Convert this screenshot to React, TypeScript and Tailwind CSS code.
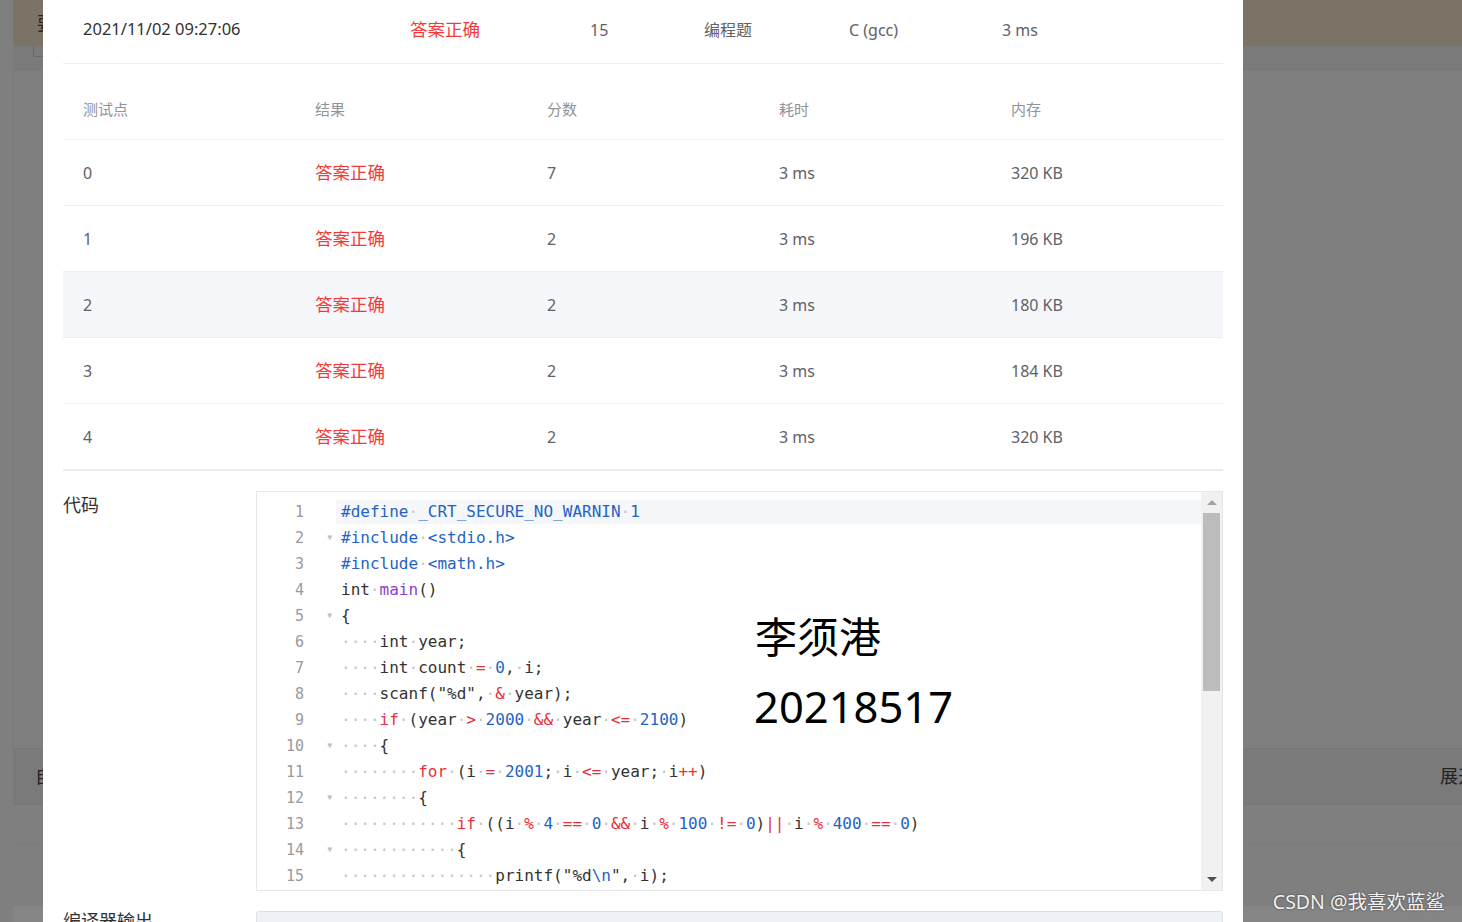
import React from "react";

type Tok = [string, string];

const D = "text-[#333333]";
const B = "text-[#1f63c6]";
const R = "text-[#e8303a]";
const P = "text-[#8b3fd0]";

const code: Tok[][] = [
  [["#define _CRT_SECURE_NO_WARNIN 1", B]],
  [["#include <stdio.h>", B]],
  [["#include <math.h>", B]],
  [["int ", D], ["main", P], ["()", D]],
  [["{", D]],
  [["    int year;", D]],
  [["    int count ", D], ["=", R], [" ", D], ["0", B], [", i;", D]],
  [["    scanf(\"%d\", ", D], ["&", R], [" year);", D]],
  [["    ", D], ["if", R], [" (year ", D], [">", R], [" ", D], ["2000", B], [" ", D], ["&&", R], [" year ", D], ["<=", R], [" ", D], ["2100", B], [")", D]],
  [["    {", D]],
  [["        ", D], ["for", R], [" (i ", D], ["=", R], [" ", D], ["2001", B], ["; i ", D], ["<=", R], [" year; i", D], ["++", R], [")", D]],
  [["        {", D]],
  [["            ", D], ["if", R], [" ((i ", D], ["%", R], [" ", D], ["4", B], [" ", D], ["==", R], [" ", D], ["0", B], [" ", D], ["&&", R], [" i ", D], ["%", R], [" ", D], ["100", B], [" ", D], ["!=", R], [" ", D], ["0", B], [")", D], ["||", R], [" i ", D], ["%", R], [" ", D], ["400", B], [" ", D], ["==", R], [" ", D], ["0", B], [")", D]],
  [["            {", D]],
  [["                printf(\"%d", D], ["\\n", B], ["\", i);", D]],
];

const folds = [2, 5, 10, 12, 14];

const cases = [
  { id: "0", score: "7", time: "3 ms", mem: "320 KB" },
  { id: "1", score: "2", time: "3 ms", mem: "196 KB" },
  { id: "2", score: "2", time: "3 ms", mem: "180 KB" },
  { id: "3", score: "2", time: "3 ms", mem: "184 KB" },
  { id: "4", score: "2", time: "3 ms", mem: "320 KB" },
];

function Tokens({ line }: { line: Tok[] }) {
  return (
    <>
      {line.map(([text, color], i) => (
        <span key={i} className={color}>
          {text.split("").map((ch, j) =>
            ch === " " ? (
              <span key={j} className="text-[#c6c6c6]">·</span>
            ) : (
              ch
            )
          )}
        </span>
      ))}
    </>
  );
}

function CodeBox() {
  return (
    <div className="relative flex h-[400px] flex-1 border border-[#e4e7ed] bg-white">
      <div className="flex-1 overflow-hidden pt-[7px] font-['DejaVu_Sans_Mono',monospace] text-[16px]">
        {code.map((line, i) => (
          <div key={i} className="flex h-[26px] items-center">
            <div className="w-[47px] text-right text-[15px] text-[#9a9a9a]">{i + 1}</div>
            <div className="flex w-[32px] justify-end pr-[4px] text-[8px] text-[#bdbdbd]">
              {folds.includes(i + 1) ? "▼" : ""}
            </div>
            <div
              className={
                i === 0
                  ? "flex h-[24px] flex-1 items-center whitespace-pre bg-[#f5f7fa] pl-[5px]"
                  : "flex h-[24px] flex-1 items-center whitespace-pre pl-[5px]"
              }
            >
              <Tokens line={line} />
            </div>
          </div>
        ))}
      </div>
      <div className="flex w-[21px] flex-col items-center bg-[#f1f1f1]">
        <div className="mt-[8px] h-0 w-0 border-x-[5px] border-b-[5px] border-x-transparent border-b-[#a3a3a3]" />
        <div className="mt-[8px] h-[178px] w-[17px] bg-[#bcbcbc]" />
        <div className="mt-auto mb-[8px] h-0 w-0 border-x-[5px] border-t-[5px] border-x-transparent border-t-[#505050]" />
      </div>
      {/* name / id written over the editor */}
      <div className="absolute left-[498px] top-[124px] font-['Noto_Sans','Noto_Sans_CJK_SC',sans-serif] text-[42px] leading-none text-black">
        李须港
      </div>
      <div className="absolute left-[497px] top-[193px] font-['Noto_Sans','Noto_Sans_CJK_SC',sans-serif] text-[43.5px] leading-none text-black">
        20218517
      </div>
    </div>
  );
}

function Modal() {
  return (
    <div className="absolute left-[43px] top-0 h-[922px] w-[1200px] overflow-hidden bg-white px-[20px] font-['Noto_Sans','Noto_Sans_CJK_SC',sans-serif]">
      {/* submission summary row */}
      <div className="flex h-[64px] items-center border-b border-[#ebeef5] pb-[4px] text-[16px] text-[#303133]">
        <div className="w-[327px] pl-[20px] text-[16.5px]">2021/11/02 09:27:06</div>
        <div className="w-[180px] pl-[20px] text-[17.5px] text-[#f5383a]">答案正确</div>
        <div className="w-[114px] pl-[20px] text-[#606266]">15</div>
        <div className="w-[145px] pl-[20px] text-[#606266]">编程题</div>
        <div className="w-[153px] pl-[20px] text-[#606266]">C (gcc)</div>
        <div className="flex-1 pl-[20px] text-[#606266]">3 ms</div>
      </div>

      {/* test cases */}
      <div className="mt-[16px] border-b border-[#e4e7ed]">
        <div className="grid h-[60px] grid-cols-5 items-center border-b border-[#ebeef5] text-[15px] text-[#909399]">
          <div className="pl-[20px]">测试点</div>
          <div className="pl-[20px]">结果</div>
          <div className="pl-[20px]">分数</div>
          <div className="pl-[20px]">耗时</div>
          <div className="pl-[20px]">内存</div>
        </div>
        {cases.map((c) => (
          <div
            key={c.id}
            className={
              c.id === "2"
                ? "grid h-[66px] grid-cols-5 items-center border-b border-[#ebeef5] bg-[#f5f7fa] text-[16px] text-[#606266]"
                : "grid h-[66px] grid-cols-5 items-center border-b border-[#ebeef5] text-[16px] text-[#606266]"
            }
          >
            <div className="pl-[20px]">{c.id}</div>
            <div className="pl-[20px] text-[17.5px] text-[#f5383a]">答案正确</div>
            <div className="pl-[20px]">{c.score}</div>
            <div className="pl-[20px]">{c.time}</div>
            <div className="pl-[20px]">{c.mem}</div>
          </div>
        ))}
      </div>

      {/* code */}
      <div className="mt-[20px] flex">
        <div className="w-[193px] pt-[1px] text-[18px] text-[#303133]">代码</div>
        <CodeBox />
      </div>

      {/* compiler output */}
      <div className="mt-[20px] flex">
        <div className="w-[193px] text-[18px] leading-[20px] text-[#303133]">编译器输出</div>
        <div className="h-[60px] flex-1 rounded-[3px] border border-[#dcdfe6] bg-[#eef1f5]" />
      </div>
    </div>
  );
}

export default function App() {
  return (
    <div className="relative h-[922px] w-[1462px] overflow-hidden bg-[#7f7f7f] font-['Noto_Sans','Noto_Sans_CJK_SC',sans-serif]">
      {/* page behind the dialog, dimmed */}
      <div className="flex h-full w-[1476px] flex-col pl-[13px]">
        <div className="flex h-[46px] items-center rounded-bl-[4px] bg-[#7b7366] pl-[24px] text-[18px] text-[#222]">
          要求
        </div>
        <div className="h-[23px] bg-[#7a7a7a] pl-[20px]">
          <div className="h-[11px] w-[20px] rounded-b-[3px] border-x border-b border-[#6a6a6a]" />
        </div>
        <div className="flex h-[736px] flex-col border-l border-t border-[#787878]">
          <div className="flex-1" />
          <div className="flex h-[57px] items-center justify-between border-y border-[#767676] bg-[#7a7a7a] pl-[21px] text-[18px] text-[#222]">
            <span>自测</span>
            <span>展开</span>
          </div>
        </div>
        <div className="h-[40px] border-b border-[#7b7b7b]" />
        <div className="flex-1" />
        <div className="h-[16px] bg-[#858585]" />
      </div>

      <Modal />

      <div className="absolute bottom-[6px] right-[17px] text-[19.5px] text-[#f2f2f2] [text-shadow:0_0_2px_rgba(0,0,0,0.6)]">
        CSDN @我喜欢蓝鲨
      </div>
    </div>
  );
}
